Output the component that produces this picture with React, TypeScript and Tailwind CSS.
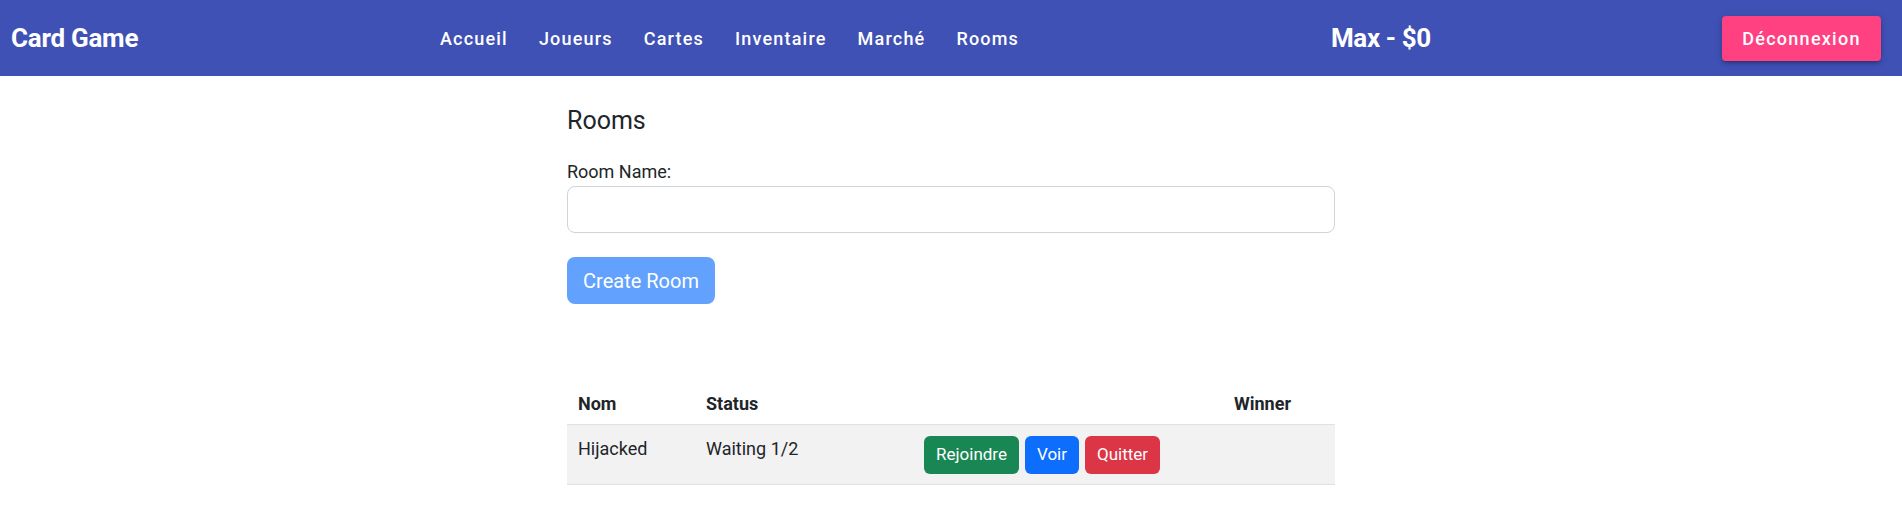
import React from "react";

export default function App() {
  const nav = ["Accueil", "Joueurs", "Cartes", "Inventaire", "Marché", "Rooms"];
  return (
    <div className="min-h-[505px] bg-white text-[#212529]" style={{ fontFamily: "Roboto, 'Liberation Sans', sans-serif" }}>
      <header className="flex h-[76px] items-center bg-[#3f51b5] pl-[11px] pr-[21px] text-white">
        <div className="w-[429px] text-[26px] font-bold tracking-[-0.01em]">Card Game</div>
        <nav className="flex w-[891px] gap-[31px] text-[18px] font-medium tracking-[0.066em]">
          {nav.map((n) => (
            <span key={n}>{n}</span>
          ))}
        </nav>
        <div className="text-[26px] font-bold tracking-[-0.015em]">Max - $0</div>
        <button className="ml-auto h-[45px] w-[159px] rounded-[4px] bg-[#ff4081] text-[18px] font-medium tracking-[0.07em] text-white shadow-[0_3px_3px_-2px_rgba(0,0,0,0.2),0_3px_4px_0_rgba(0,0,0,0.14),0_1px_8px_0_rgba(0,0,0,0.12)]">
          Déconnexion
        </button>
      </header>

      <main className="mx-auto w-[768px] pt-[30px]">
        <h4 className="text-[25px] font-normal leading-[1.2]">Rooms</h4>
        <label className="mt-[23px] block text-[18px] leading-[26px]">Room Name:</label>
        <input
          type="text"
          className="mt-[1px] block h-[47px] w-full rounded-lg border border-[#ced4da] bg-white px-4 text-[20px] outline-none"
        />
        <button
          disabled
          className="mt-[24px] h-[47px] w-[148px] rounded-lg bg-[#62a1fe] text-[20px] text-white"
        >
          Create Room
        </button>

        <div className="mt-[80px] text-[18px]">
          <div className="grid grid-cols-[131px_218px_310px_1fr] border-b border-[#dee2e6] font-bold">
            <div className="py-2 pl-[11px] pr-2 leading-[24px]">Nom</div>
            <div className="px-2 py-2 leading-[24px]">Status</div>
            <div className="px-2 py-2 leading-[24px]"></div>
            <div className="px-2 py-2 leading-[24px]">Winner</div>
          </div>
          <div className="grid h-[60px] grid-cols-[131px_218px_310px_1fr] border-b border-[#dee2e6] bg-[#f2f2f2]">
            <div className="pt-[12px] pl-[11px] pr-2 leading-[24px]">Hijacked</div>
            <div className="px-2 pt-[12px] leading-[24px]">Waiting 1/2</div>
            <div className="flex items-start gap-[6px] px-2 pt-[11px] text-[17px]">
              <button className="h-[38px] rounded-md bg-[#198754] px-3 text-white">Rejoindre</button>
              <button className="h-[38px] rounded-md bg-[#0d6efd] px-3 text-white">Voir</button>
              <button className="h-[38px] rounded-md bg-[#dc3545] px-3 text-white">Quitter</button>
            </div>
            <div className="px-2 pt-[12px] leading-[24px]"></div>
          </div>
        </div>
      </main>
    </div>
  );
}
